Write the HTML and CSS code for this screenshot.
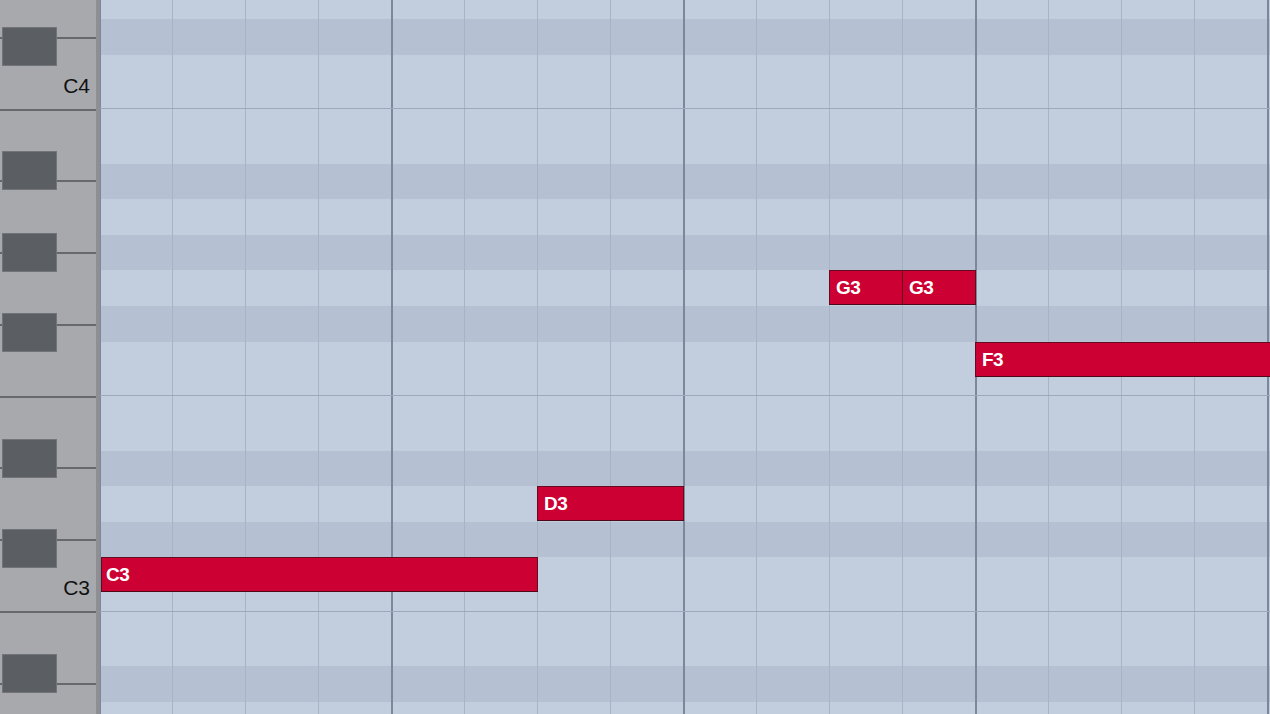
FILE: index.html
```html
<!DOCTYPE html>
<html lang="en">
<head>
    <meta charset="UTF-8">
    <meta name="viewport" content="width=device-width, initial-scale=1.0">
    <title>Piano Roll</title>
    <link rel="stylesheet" href="styles.css">
</head>
<body>
    <div class="roll">
        <!-- keyboard, top to bottom: D4 .. A2 -->
        <div class="keyboard">
            <div class="key"><span class="black cs"></span></div>
            <div class="key c"><span class="label">C4</span></div>
            <div class="key"><span class="black as"></span></div>
            <div class="key"><span class="black gs"></span></div>
            <div class="key"><span class="black fs"></span></div>
            <div class="key"></div>
            <div class="key"><span class="black ds"></span></div>
            <div class="key"><span class="black cs"></span></div>
            <div class="key c"><span class="label">C3</span></div>
            <div class="key"><span class="black as"></span></div>
            <div class="key"><span class="black gs"></span></div>
        </div>

        <div class="grid">
            <div class="lanes">
                <div class="lane edge"></div>          <!-- D4 -->
                <div class="lane dark"></div>          <!-- C#4 -->
                <div class="lane wide split"></div>    <!-- C4 -->
                <div class="lane wide"></div>          <!-- B3 -->
                <div class="lane dark"></div>          <!-- A#3 -->
                <div class="lane"></div>               <!-- A3 -->
                <div class="lane dark"></div>          <!-- G#3 -->
                <div class="lane"></div>               <!-- G3 -->
                <div class="lane dark"></div>          <!-- F#3 -->
                <div class="lane wide split"></div>    <!-- F3 -->
                <div class="lane wide"></div>          <!-- E3 -->
                <div class="lane dark"></div>          <!-- D#3 -->
                <div class="lane"></div>               <!-- D3 -->
                <div class="lane dark"></div>          <!-- C#3 -->
                <div class="lane wide split"></div>    <!-- C3 -->
                <div class="lane wide"></div>          <!-- B2 -->
                <div class="lane dark"></div>          <!-- A#2 -->
                <div class="lane"></div>               <!-- A2 -->
            </div>

            <!-- grid-area: pitch row / start step / next row / end step -->
            <div class="notes">
                <div class="note first" style="grid-area: 15 / 1 / 16 / 7">C3</div>
                <div class="note" style="grid-area: 13 / 7 / 14 / 9">D3</div>
                <div class="note" style="grid-area: 8 / 11 / 9 / 12">G3</div>
                <div class="note" style="grid-area: 8 / 12 / 9 / 13">G3</div>
                <div class="note" style="grid-area: 10 / 13 / 11 / 18">F3</div>
            </div>
        </div>
    </div>
</body>
</html>
```

FILE: styles.css
```css
* {
    margin: 0;
    padding: 0;
    box-sizing: border-box;
}

body {
    font-family: "Liberation Sans", Arial, sans-serif;
    overflow: hidden;
}

.roll {
    display: flex;
    height: 100vh;
    overflow: hidden;
    background: #c2cede;
}

/* Keyboard */

.keyboard {
    flex: none;
    width: 100px;
    display: flex;
    flex-direction: column;
    background: #a8a9ad;
    border-right: 4px solid #8e8f93;
    overflow: hidden;
}

.key {
    position: relative;
    flex: none;
    height: 71.75px;
    border-bottom: 2px solid #66686c;
    display: flex;
    align-items: flex-end;
    justify-content: flex-end;
    padding: 0 6px 13px 0;
}

.key:first-child {
    margin-top: -33px;
}

.label {
    font-size: 21px;
    line-height: 21px;
    color: #111;
}

.black {
    position: absolute;
    left: 2px;
    width: 55px;
    height: 39px;
    background: #5b5e62;
    border: 1px solid #717478;
    z-index: 1;
}

.black.cs { top: calc(100% - 10px); }
.black.ds { top: calc(100% - 28px); }
.black.fs { top: calc(100% - 11px); }
.black.gs { top: calc(100% - 19px); }
.black.as { top: calc(100% - 29px); }

/* Note grid */

.grid {
    flex: 1;
    display: grid;
    overflow: hidden;
}

.lanes, .notes {
    grid-area: 1 / 1;
}

.lanes {
    display: flex;
    flex-direction: column;
}

.lane {
    flex: none;
    height: 35.6px;
    background-color: #c2cede;
    background-image:
        linear-gradient(to right, transparent 290px, #7b889b 290px),
        linear-gradient(to right, transparent 72px, #a7b4c6 72px);
    background-size: 292px 100%, 73px 100%;
    background-position: 1px 0, 0 0;
}

.lane.edge {
    height: 19px;
}

.lane.wide {
    height: 54.5px;
}

.lane.dark {
    background-color: #b5c1d2;
}

.lane.split {
    box-shadow: inset 0 -1px 0 #9ca9bb;
}

.notes {
    display: grid;
    grid-template-columns: repeat(17, 73px);
    grid-template-rows:
        19px 35.6px 54.5px 54.5px
        repeat(5, 35.6px)
        54.5px 54.5px
        repeat(3, 35.6px)
        54.5px 54.5px
        35.6px 35.6px;
}

.note {
    align-self: start;
    height: 35px;
    margin-left: -1px;
    padding-left: 6px;
    background: #cc0033;
    border: 1px solid #650b20;
    border-bottom-color: #4e0818;
    color: #fff;
    font-size: 19px;
    font-weight: bold;
    letter-spacing: -0.5px;
    line-height: 33px;
    white-space: nowrap;
    overflow: hidden;
}

.note.first {
    margin-left: 1px;
    padding-left: 4px;
}
```
